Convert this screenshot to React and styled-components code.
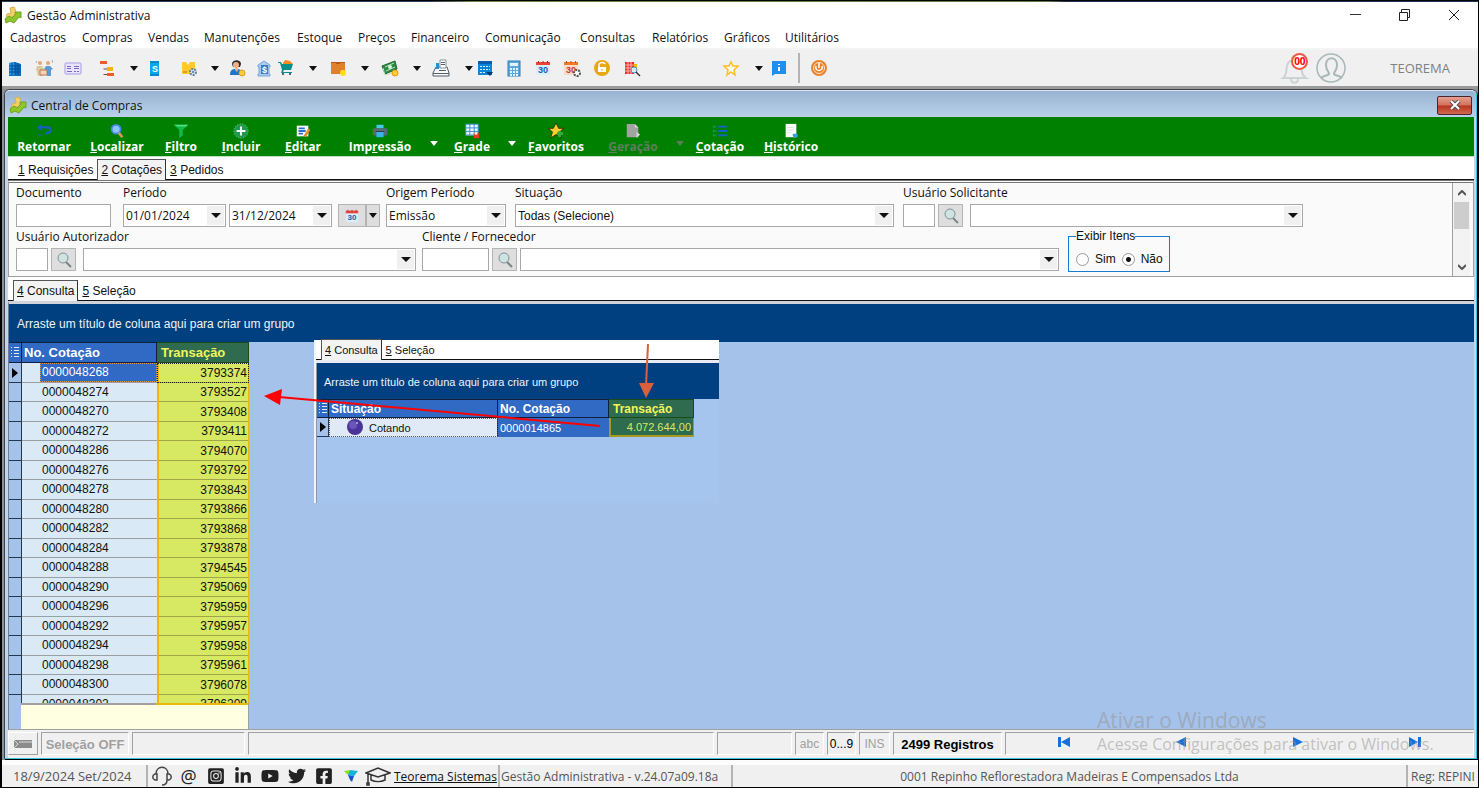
import React from 'react';
import styled, { css, createGlobalStyle } from 'styled-components';
import {
  FaInstagramSquare,
  FaLinkedinIn,
  FaYoutube,
  FaTwitter,
  FaFacebookSquare,
} from 'react-icons/fa';


const uiFont = '"Open Sans", "Noto Sans", sans-serif';
const gridFont = '"Liberation Sans", Arial, sans-serif';
const sunkenBorder = css`
  border: 1px solid;
  border-color: #a0a0a0 #fff #fff #a0a0a0;
`;

const GlobalStyle = createGlobalStyle`
  * {
    box-sizing: border-box;
  }

  body {
    margin: 0;
    background: #000;
    font-family: ${uiFont};
    font-size: 12px;
    color: #111;
  }

  button, input, select {
    font: inherit;
    color: inherit;
    margin: 0;
    padding: 0;
    border-radius: 0;
  }

  button {
    border: 0;
    background: none;
  }
`;

const Desktop = styled.div`
  position: relative;
  display: flex;
  flex-direction: column;
  height: 100vh;
  overflow: hidden;
  border: solid #000;
  border-width: 1px 1px 1px 2px;
  background: #fff;
`;

const Backdrop = styled.div`
  flex: none;
  height: 1px;
  background: linear-gradient(90deg, #24405c 29%, #6b8a4a 32%, #5a7a4a 71%, #1d3458 72%);
`;

const TitleBar = styled.header`
  flex: none;
  display: flex;
  align-items: center;
  height: 26px;
  padding-left: 2px;
  gap: 5px;
`;

const WindowButtons = styled.div`
  display: flex;
  margin-left: auto;
`;

const WindowButton = styled.button`
  display: flex;
  align-items: center;
  justify-content: center;
  width: 49px;
  height: 24px;
`;

const Menu = styled.nav`
  flex: none;
  display: flex;
  height: 20px;
  padding-left: 8px;
`;

const MenuItem = styled.button`
  width: ${props => props.$width}px;
  line-height: 20px;
  text-align: left;
  white-space: nowrap;
`;

const Toolbar = styled.div`
  flex: none;
  display: flex;
  align-items: center;
  height: 38px;
  border-top: 2px solid #f4f4f4;
  background: #f0f0f0;
`;

const ToolButton = styled.button`
  flex: none;
  display: flex;
  align-items: center;
  justify-content: center;
  width: ${props => (props.$small ? 12 : 20)}px;
  height: 24px;
  margin-left: ${props => props.$gap}px;
`;

const ToolSeparator = styled.div`
  width: 2px;
  height: 30px;
  margin-left: 9px;
  background: #b4b4b4;
`;

const Account = styled.div`
  display: flex;
  align-items: center;
  margin-left: auto;
  padding-right: 28px;
  color: #808080;
`;

const AccountName = styled.span`
  margin-left: 44px;
  font-size: 13px;
  line-height: 18px;
`;

const Bell = styled.button`
  position: relative;
  width: 30px;
  height: 34px;
  margin-right: 6px;
`;

const Badge = styled.span`
  position: absolute;
  top: 2px;
  right: 2px;
  width: 17px;
  height: 17px;
  border: 2px solid #f05545;
  border-radius: 50%;
  background: #fff;
  color: #f00;
  font-size: 10px;
  font-weight: bold;
  line-height: 13px;
  text-align: center;
`;

const Workspace = styled.main`
  flex: 1;
  display: flex;
  min-height: 0;
  padding: 3px 1px 1px 2px;
  background: linear-gradient(#9a9a9a 3px, #8a8f98 3px);
`;

const ChildWindow = styled.section`
  flex: 1;
  display: flex;
  flex-direction: column;
  min-width: 0;
  padding: 0 2px 0 3px;
  border: 1px solid #3c3f45;
  border-right-color: #35c3e0;
  border-bottom-color: #35c3e0;
  border-radius: 6px 6px 0 0;
  box-shadow: 1px 1px 0 #000;
  background: #c4d6ea;
`;

const ChildTitle = styled.div`
  flex: none;
  display: flex;
  align-items: center;
  height: 27px;
  gap: 4px;
  margin: 0 -2px 0 -3px;
  padding: 2px 2px 0 4px;
  border-top: 1px solid #dbe6f2;
  border-radius: 5px 5px 0 0;
  background: linear-gradient(#98b3d2, #b9d1ea);
`;

const CloseButton = styled.button`
  display: flex;
  align-items: center;
  justify-content: center;
  width: 35px;
  height: 19px;
  margin: 0 2px 0 auto;
  border: 1px solid #4a2430;
  border-radius: 2px;
  background: linear-gradient(#e3a090, #d3705c 48%, #b8321c 52%, #cf6a50);
`;

const ActionBar = styled.div`
  flex: none;
  display: flex;
  height: 40px;
  border-bottom: 1px solid #bfe0bf;
  background: #008000;
`;

const Action = styled.button`
  display: flex;
  flex-direction: column;
  align-items: center;
  width: ${props => props.$width}px;
  padding-top: 6px;
  color: #fff;
  font-weight: bold;
  line-height: 16px;
  white-space: nowrap;

  svg {
    flex: none;
  }

  &:disabled {
    color: #5f7d5f;
  }
`;

const ActionCaret = styled.button`
  width: ${props => props.$width}px;
  padding-top: 10px;
  color: ${props => (props.disabled ? '#5f7d5f' : '#fff')};
`;

const Tabs = styled.div`
  flex: none;
  display: flex;
  align-items: flex-end;
  height: ${props => props.$height || 23}px;
  padding-left: ${props => props.$indent || 0}px;
  border-bottom: 1px solid #111;
  background: #fff;
  font-family: ${gridFont};
  font-size: 12px;
`;

const Tab = styled.button`
  height: 20px;
  padding: 0 3px;
  border: 1px solid transparent;
  border-bottom: 0;
  line-height: 18px;
  white-space: nowrap;
  ${props => props.$active && css`
    height: 21px;
    margin-bottom: -1px;
    border-color: #555 #333 #333 #555;
    background: #f3f3f3;
  `}
`;

const FilterPanel = styled.form`
  flex: none;
  display: flex;
  height: 97px;
  padding-right: 3px;
  border: solid #a0a0a0;
  border-width: 1px;
  border-top: 3px double #777;
  background: #fafafa;
`;

const FilterFields = styled.div`
  flex: 1;
  min-width: 0;
  overflow: hidden;
`;

const FilterRow = styled.div`
  display: flex;
  height: 44px;
  padding-left: 7px;
`;

const Field = styled.div`
  flex: none;
  margin-left: ${props => props.$gap || 0}px;
`;

const FieldLabel = styled.label`
  display: block;
  height: 21px;
  line-height: 20px;
  white-space: nowrap;
`;

const Controls = styled.div`
  display: flex;
  gap: 3px;
`;

const TextBox = styled.input`
  width: ${props => props.$width}px;
  height: 23px;
  border: 1px solid #a8a8a8;
  background: #fff;
`;

const Combo = styled.div`
  position: relative;
  width: ${props => props.$width}px;
  height: 23px;
  margin-left: ${props => props.$gap || 0}px;
  font-family: ${props => (props.$grid ? gridFont : uiFont)};

  select, input {
    width: 100%;
    height: 100%;
    padding: 0 20px 0 2px;
    border: 1px solid #a8a8a8;
    background: #fff;
    appearance: none;
  }
`;

const ComboArrow = styled.span`
  position: absolute;
  top: 2px;
  right: 2px;
  display: flex;
  align-items: center;
  justify-content: center;
  width: 17px;
  height: 19px;
  background: #f0f0f0;
  pointer-events: none;
`;

const GrayButton = styled.button`
  display: flex;
  align-items: center;
  justify-content: center;
  width: ${props => props.$width}px;
  height: 23px;
  border: 1px solid #b4b4b4;
  background: #dedede;
`;

const SplitButton = styled.div`
  display: flex;
`;

const ShowItems = styled.fieldset`
  width: 102px;
  min-width: 0;
  height: 42px;
  margin: 3px 0 0 9px;
  padding: 9px 0 0 7px;
  border: 1px solid #1a7ad0;
  font-family: ${gridFont};

  legend {
    padding: 0;
    line-height: 13px;
  }

  div {
    display: flex;
    align-items: center;
    gap: 6px;
  }
`;

const Radio = styled.input`
  flex: none;
  appearance: none;
  width: 13px;
  height: 13px;
  border: 1px solid #999;
  border-radius: 50%;
  background: #fff;

  &:checked {
    background: radial-gradient(#111 0 2px, #fff 3px);
  }
`;

const ScrollBar = styled.div`
  display: flex;
  flex-direction: column;
  align-items: center;
  width: 18px;
  border-left: 1px solid #a0a0a0;
  background: #f3f3f3;
`;

const ScrollArrow = styled.button`
  display: flex;
  align-items: center;
  justify-content: center;
  width: 17px;
  height: 19px;
  color: #555;
`;

const ScrollThumb = styled.div`
  width: 15px;
  height: 27px;
  margin-bottom: auto;
  background: #cdcdcd;
`;

const GridArea = styled.div`
  position: relative;
  flex: 1;
  display: flex;
  flex-direction: column;
  min-height: 0;
  border-top: 3px solid #d0d4da;
  border-left: 1px solid #6d7f98;
  border-bottom: 1px solid #a0a0a0;
  background: #a4c2ea;
`;

const GroupBar = styled.div`
  flex: none;
  height: ${props => props.$height}px;
  padding-left: ${props => props.$indent}px;
  background: #004080;
  color: #eef4fb;
  font-family: ${gridFont};
  font-size: ${props => (props.$small ? 11 : 12)}px;
  line-height: ${props => props.$height + 2}px;
  white-space: nowrap;
`;

const RowsViewport = styled.div`
  flex: 1;
  min-height: 0;
  overflow: hidden;
`;

const QuoteTable = styled.table`
  width: ${props => props.$width}px;
  border-collapse: separate;
  border-spacing: 0;
  table-layout: fixed;
  font-family: ${gridFont};
  font-size: ${props => (props.$small ? 11 : 12)}px;

  tbody tr {
    height: ${props => (props.$small ? 19 : 20)}px;
  }

  tbody tr:nth-child(even) {
    height: 19px;
  }
`;

const HeadCell = styled.th`
  width: ${props => props.$width}px;
  height: ${props => (props.$small ? 19 : 21)}px;
  padding: 0 2px;
  border: solid #10203c;
  border-width: 1px 1px 1px 0;
  background: #316ac5;
  color: #fff;
  font-size: ${props => (props.$small ? 12 : 13)}px;
  line-height: 16px;
  text-align: left;
  white-space: nowrap;
  ${props => props.$marked && css`
    padding-left: 4px;
    border-color: #1d4a12;
    background: #2f6b4f;
    color: #f2f55c;
  `}
`;

const MarkerCell = styled.td`
  padding: 0;
  border: solid #26364f;
  border-width: 0 1px 1px 0;
  background: #a4c2ea;
  line-height: 0;
  text-align: center;
`;

const NumberCell = styled.td`
  padding: 0 0 0 18px;
  border-bottom: 1px solid #9a9fa4;
  background: #d9eaf6;
  line-height: 17px;

  span {
    display: block;
    padding-left: 2px;
  }

  ${props => props.$selected && css`
    color: #fff;

    span {
      outline: 1px dotted #d89a4a;
      outline-offset: -1px;
      background: #316ac5;
      line-height: 19px;
    }
  `}
`;

const MarkedCell = styled.td`
  padding: 0 1px 0 0;
  border: solid #eab90c;
  border-width: 0 1px 0 2px;
  background: #d7e862;
  box-shadow: inset 0 -1px 0 #a0a548;
  line-height: 17px;
  text-align: right;
  ${props => props.$selected && css`
    outline: 1px dotted #222;
    outline-offset: -1px;
  `}
`;

const GridFooter = styled.div`
  flex: none;
  width: 240px;
  height: 26px;
  border-right: 1px solid #a0a0a0;
  border-left: 12px solid #a4c2ea;
  background:
    linear-gradient(90deg, #a0a0a0 135px, #eab90c 135px) 0 0 / 100% 2px no-repeat,
    #ffffe1;
`;

const Excerpt = styled.div`
  position: absolute;
  top: 36px;
  left: 305px;
  width: 405px;
  height: 163px;
  padding-left: 1px;
  border-left: 2px solid #f4f4f4;
  background: #a5c5ee;
  box-shadow: inset 1px 0 0 #8c97a8;
`;

const ExcerptTabs = styled(Tabs)`
  margin: 0 0 3px -1px;
  box-shadow: 0 3px 0 #e8ecf2;
  font-size: 11px;
`;

const StatusCell = styled.td`
  padding: 0 0 0 18px;
  border-right: 1px solid #10203c;
  background: #dfeaf6;
  outline: 1px dotted #555;
  outline-offset: -1px;

  div {
    display: flex;
    align-items: center;
    gap: 5px;
  }
`;

const PickedCell = styled.td`
  padding: 0 2px;
  background: ${props => (props.$marked ? '#2f6b4f' : '#316ac5')};
  color: ${props => (props.$marked ? '#d7e862' : '#fff')};
  ${props => props.$marked && css`
    border: solid #a89a20;
    border-width: 0 1px 2px 2px;
    text-align: right;
  `}
`;

const Annotations = styled.svg`
  position: absolute;
  top: 0;
  left: 0;
  pointer-events: none;
`;

const StatusBar = styled.div`
  flex: none;
  display: flex;
  gap: 3px;
  height: 28px;
  padding: 2px 0 3px;
  background: #f0f0f0;
  font-family: ${gridFont};
`;

const StatusButton = styled.button`
  width: 30px;
  border: 1px solid;
  border-color: #fff #a0a0a0 #a0a0a0 #fff;
`;

const StatusPanel = styled.div`
  ${sunkenBorder}
  flex: ${props => (props.$width ? 'none' : '1')};
  width: ${props => props.$width}px;
  min-width: 0;
  color: ${props => (props.$on ? '#000' : '#a0a0a0')};
  font-size: ${props => (props.$bold ? 13 : 12)}px;
  font-weight: ${props => (props.$bold ? 'bold' : 'normal')};
  line-height: 23px;
  text-align: center;
  white-space: nowrap;
`;

const Navigator = styled(StatusPanel)`
  display: flex;
  align-items: center;
  justify-content: space-around;
`;

const AppFooter = styled.footer`
  flex: none;
  display: flex;
  height: 27px;
  border-top: 5px solid #fcfcfc;
  background: #f0f0f0;
  color: #555;
  line-height: 23px;
  white-space: nowrap;
`;

const FooterPanel = styled.div`
  flex: ${props => (props.$width ? 'none' : '1')};
  width: ${props => props.$width}px;
  padding-left: ${props => props.$indent || 0}px;
  border-right: 2px solid ${props => (props.$last ? 'transparent' : '#b4b4b4')};
  overflow: hidden;
  font-size: ${props => (props.$large ? 13 : 12)}px;
  text-align: ${props => (props.$center ? 'center' : 'left')};
`;

const Links = styled.div`
  flex: none;
  display: flex;
  align-items: center;
  width: 352px;
  border-right: 2px solid #b4b4b4;
  color: #222;
`;

const SocialLink = styled.a`
  display: flex;
  align-items: center;
  justify-content: center;
  width: 27px;
  color: inherit;
  font-size: 18px;
  text-decoration: none;
`;

const CompanyLink = styled.a`
  margin-left: 3px;
  color: #111;
`;

const Watermark = styled.div`
  position: absolute;
  right: 56px;
  bottom: 33px;
  width: 325px;
  color: rgba(150, 150, 150, 0.55);
  font-size: 16px;
  line-height: 20px;
  white-space: nowrap;
  pointer-events: none;

  strong {
    display: block;
    font-size: 21px;
    font-weight: normal;
    line-height: 28px;
  }
`;


const icons = {
  building: (
    <>
      <path fill="#0b6fc4" d="M3 4l6-1 6 2v12H3z" />
      <path fill="#2196e8" d="M3 4l6-1v13H3z" />
      <path stroke="#064b8f" d="M3 7h12M3 10h12M3 13h12M6 4v12M9 3v13M12 4v12" fill="none" />
    </>
  ),
  people: (
    <>
      <circle cx="5" cy="4" r="2" fill="#e0a777" />
      <circle cx="13" cy="4" r="2" fill="#e0a777" />
      <path fill="#d8c9a0" d="M2 7h5l2 3-1 7H3L1 10z" />
      <path fill="#5b9bd5" d="M11 7h4l3 3-2 1v6h-4v-5l-3-2z" />
      <path fill="#f4d5bd" stroke="#c1754b" d="M5 11h7v5H5z" />
      <path stroke="#b0aaa0" d="M2 2l-1 2M17 1l1 3" />
    </>
  ),
  card: (
    <>
      <rect x="1" y="4" width="16" height="11" rx="1" fill="#e9e4ff" stroke="#a79be0" />
      <path stroke="#7768c9" d="M3 7.500h4M3 9.500h4M3 12.500h5M10 7.500h5M10 9.500h5M10 12.500h2M13 12.500h2" />
    </>
  ),
  tree: (
    <>
      <path fill="#f05a28" d="M2 2h7v3H2zM9 14h7v3H9z" />
      <path fill="#f5b400" d="M9 8h6v4H9z" />
      <path stroke="#555" fill="none" d="M5.500 15.500H9M5.500 10H9" />
    </>
  ),
  money: (
    <>
      <path fill="#0aa5ea" d="M5 2h9v15H5z" />
      <path fill="#0789cf" d="M5 2h9v2H5zM5 15h9v2H5z" />
      <text x="7" y="13" fontSize="9" fontWeight="bold" fill="#fff" fontFamily="Liberation Sans">S</text>
    </>
  ),
  package: (
    <>
      <path fill="#ffc928" d="M2 3h4l2 3 2-3h5v12H2z" />
      <path stroke="#b5732c" d="M4 12v2M6 12v2" />
      <circle cx="13" cy="13" r="3" fill="#dce7f2" stroke="#6a7f98" strokeWidth="2" strokeDasharray="2 1" />
      <circle cx="13" cy="13" r="1" fill="#4a6b98" />
    </>
  ),
  person: (
    <>
      <path fill="#2b2b33" d="M4 5c0-5 9-5 9 0l-1 3H5z" />
      <circle cx="8" cy="6" r="3" fill="#f3b27a" />
      <path fill="#1a78c8" d="M2 16c0-5 2-6 6-6s6 1 6 6z" />
      <path fill="#f3b27a" d="M7 9h3v2l-1 2-2-2z" />
      <circle cx="14" cy="14" r="3" fill="#ffcd3c" stroke="#e39a12" />
    </>
  ),
  bank: (
    <>
      <path fill="#a9c9f2" stroke="#7aa5dc" d="M3 6l6-4 6 4v2h-1v7h1v2H3v-2h1V8H3z" />
      <rect x="6" y="6" width="7" height="9" fill="#3e79c8" />
      <text x="7" y="14" fontSize="9" fontWeight="bold" fill="#fff" fontFamily="Liberation Sans">$</text>
    </>
  ),
  cart: (
    <>
      <path fill="#f48b20" d="M6 4l2-3 5 1 3 3H6z" />
      <path fill="#08918a" d="M1 3h3l1 2h11l-2 6H7l-1 2h9v1H4l1-3-2-7H1z" />
      <circle cx="6" cy="15" r="1" fill="#163b50" />
      <circle cx="13" cy="15" r="1" fill="#163b50" />
    </>
  ),
  box: (
    <>
      <path fill="#e0802c" d="M2 3h14v12H2z" />
      <path fill="#b9581b" d="M2 3h14v1H2zM7 4h4v1H7z" />
      <circle cx="14" cy="14" r="3" fill="#ffde14" />
    </>
  ),
  cash: (
    <>
      <path fill="#2d8a43" stroke="#176a30" d="M1 7l13-5 2 8-12 5z" />
      <path stroke="#bfe3c2" d="M4 8l9-4M5 12l9-4M2 9l2 7 8-2" fill="none" />
      <circle cx="9" cy="8" r="2" fill="#d9f2d9" />
      <circle cx="14" cy="14" r="3" fill="#ffcd3c" stroke="#e39a12" />
    </>
  ),
  register: (
    <>
      <path fill="#f7f9fb" stroke="#4f5a64" d="M4 8h11l2 6v3H1v-3z" />
      <path fill="#fff" stroke="#8a949c" d="M8 1h6v8H8z" />
      <path fill="#2c8fd1" d="M4 4h3v6H4z" />
      <path stroke="#56616b" d="M9 3.500h4M9 5.500h4M1 14.500h16M7 11.500h7" />
    </>
  ),
  calendarBlue: (
    <>
      <path fill="#0a85d8" d="M2 2h14v14H2z" />
      <path fill="#0a5cae" d="M2 2h14v3H2z" />
      <path stroke="#d8efff" d="M4 7.500h10M4 10.500h10M4 13.500h6" strokeDasharray="2 1" />
      <path fill="#063a6e" d="M10 13h7l-3 4z" />
    </>
  ),
  calculator: (
    <>
      <rect x="3" y="2" width="12" height="15" fill="#5ea9dc" stroke="#2e7db8" />
      <path fill="#e6f4fd" d="M5 4h8v3H5z" />
      <path stroke="#e6f4fd" strokeWidth="2" strokeDasharray="2 1" d="M5 10h8M5 13h8M5 16h8" />
    </>
  ),
  calendar: (
    <>
      <rect x="2" y="3" width="14" height="13" fill="#dceefb" />
      <path fill="#e8443a" d="M2 3h14v3H2z" />
      <path stroke="#a82a24" d="M4.500 2v2M9 2v2M13.500 2v2" />
      <text x="4" y="14" fontSize="9" fontWeight="bold" fill="#1760b0" fontFamily="Liberation Sans">30</text>
    </>
  ),
  calendarGear: (
    <>
      <rect x="1" y="3" width="14" height="13" fill="#f8dcc9" />
      <path fill="#f07a28" d="M1 3h14v3H1z" />
      <path stroke="#b85010" d="M3.500 2v2M8 2v2M12.500 2v2" />
      <text x="3" y="14" fontSize="9" fontWeight="bold" fill="#cc3a2c" fontFamily="Liberation Sans">30</text>
      <circle cx="14" cy="14" r="3" fill="#fff" stroke="#4a5560" strokeWidth="2" strokeDasharray="2 1" />
    </>
  ),
  lock: (
    <>
      <circle cx="9" cy="9" r="8" fill="#e8a816" />
      <path fill="#fff" d="M5 8h8v5H5z" />
      <path fill="none" stroke="#fff" strokeWidth="1.5" d="M6 8V6c0-3 5-3 6-1" />
      <path stroke="#e8a816" d="M9 10v2" />
    </>
  ),
  buildingSearch: (
    <>
      <path fill="#e0352e" d="M2 3h9v12H2z" />
      <path fill="#f5b400" d="M11 5h3v8h-3z" />
      <path stroke="#ffb0aa" d="M2 6h9M2 9h9M2 12h9M5 3v12M8 3v12" />
      <circle cx="11" cy="11" r="3" fill="#d5ebf8" stroke="#4c90c0" />
      <path stroke="#333" strokeWidth="1.5" d="M13 13l4 4" />
    </>
  ),
  starOutline: (
    <path fill="#fffdf2" stroke="#fcbf22" strokeWidth="1.5" d="M9 3l2 4h5l-4 4 1 5-4-3-4 3 1-5-4-4h5z" />
  ),
  info: (
    <>
      <path fill="#1e8fee" d="M2 2h14v13H5l-3 2z" />
      <path stroke="#fff" strokeWidth="2" d="M9 8v4M9 5v1" />
    </>
  ),
  power: (
    <>
      <circle cx="9" cy="9" r="8" fill="#e8832c" />
      <circle cx="9" cy="9" r="5.5" fill="none" stroke="#fbe3cd" strokeWidth="1" />
      <path fill="none" stroke="#fff" strokeWidth="1.5" d="M6 7c-2 6 8 6 6 0M9 4v5" />
    </>
  ),
  back: (
    <>
      <path fill="none" stroke="#145fc4" strokeWidth="2.500" d="M3 5h10c5 0 4 6 0 6h-2" />
      <path fill="#145fc4" d="M1 5l5-4v8z" />
      <path stroke="#145fc4" strokeWidth="2" strokeDasharray="1 1" d="M2 13h11" />
    </>
  ),
  find: (
    <>
      <circle cx="8" cy="7" r="5" fill="#8ac4fa" stroke="#4388e0" strokeWidth="2" />
      <path stroke="#d69a5c" strokeWidth="3" d="M11 11l4 5" />
    </>
  ),
  funnel: (
    <>
      <path fill="#12b84a" d="M1 2h16l-6 6v6l-4 3V8z" />
      <path fill="#4ee07c" d="M1 2h16l-2 2H5z" />
    </>
  ),
  add: (
    <>
      <circle cx="9" cy="9" r="8" fill="#1f9a4e" />
      <circle cx="9" cy="9" r="8" fill="none" stroke="#9bd9b0" strokeDasharray="1 2" />
      <path stroke="#fff" strokeWidth="2" d="M9 4v10M4 9h10" />
    </>
  ),
  edit: (
    <>
      <path fill="#fff" d="M2 3h13v12H2z" />
      <path stroke="#2c6fc8" strokeWidth="2" d="M4 6h7M4 9h8M4 12h5" />
      <path stroke="#f08a24" strokeWidth="3" d="M16 7l-5 8" />
    </>
  ),
  printer: (
    <>
      <path fill="#45c8ee" d="M5 2h8v4H5z" />
      <path fill="#596a78" d="M1 6h16v8H1z" />
      <path fill="#35b5e5" d="M5 10h8v6H5z" />
      <path fill="#2b3a48" d="M4 9h10v1H4z" />
    </>
  ),
  table: (
    <>
      <path fill="#eaf6ff" d="M2 1h14v13H2z" />
      <path stroke="#2a86d8" fill="none" d="M2 1.500h14v12H2zM2 5.500h14M2 9.500h14M6.500 1v13M11.500 1v13" />
      <path fill="#e63b24" d="M11 11h6v6h-6z" />
      <path fill="#fff" d="M12 11h3v2h-3z" />
    </>
  ),
  favorite: (
    <>
      <path fill="#ffce2e" stroke="#3a2a00" d="M9 0l3 6h6l-5 4 2 7-6-4-6 4 2-7-5-4h6z" />
      <path stroke="#2fae3e" strokeWidth="3" d="M13 9v7M10 12h7" />
    </>
  ),
  sheetGray: (
    <>
      <path fill="#a3a3a3" d="M2 1h9l4 4v11H2z" />
      <path fill="#d8d8d8" d="M11 1l4 4h-4zM13 10l4 3-4 4z" />
    </>
  ),
  list: (
    <>
      <path stroke="#1a5fd0" strokeWidth="2" d="M7 4h10M7 9h10M7 14h10" />
      <path stroke="#12a070" strokeWidth="2" strokeDasharray="2 1" d="M1 4h4M1 9h4M1 14h4" />
    </>
  ),
  sheet: (
    <>
      <path fill="#fff" d="M3 1h12v15H3z" />
      <path stroke="#d3dbe2" d="M5 5h7M5 8h7M5 11h4" />
      <path fill="#3f9be0" d="M11 12h5l1 3-3 2-3-2z" />
    </>
  ),
  logo: (
    <>
      <path fill="#f4cf65" stroke="#d9b14a" d="M6 2l4-1 2 4-2 3 2 3H2l1-3 4-1z" />
      <path fill="#8fc62a" stroke="#6fa524" d="M1 13l4-3 3 2 4-4-1-2h6v6l-2-1-5 6-4-2-4 2z" />
    </>
  ),
  magnifier: (
    <>
      <circle cx="8" cy="7" r="5" fill="#cfe3e3" stroke="#7f9294" />
      <path stroke="#7b8587" strokeWidth="2" d="M11 11l5 5" />
    </>
  ),
};

function Icon({ name, size = 18 }) {
  return (
    <svg width={size} height={size} viewBox="0 0 18 18" aria-hidden="true">{icons[name]}</svg>
  );
}

function Caret({ width = 8 }) {
  return (
    <svg width={width} height={5} viewBox="0 0 10 5" preserveAspectRatio="none" aria-hidden="true">
      <path fill="currentColor" d="M0 0h10L5 5z" />
    </svg>
  );
}

function Hot({ text, at = 0 }) {
  return (
    <span>{text.slice(0, at)}<u>{text[at]}</u>{text.slice(at + 1)}</span>
  );
}

const menuItems = [
  ['Cadastros', 72], ['Compras', 66], ['Vendas', 56], ['Manutenções', 93],
  ['Estoque', 61], ['Preços', 53], ['Financeiro', 74], ['Comunicação', 95],
  ['Consultas', 72], ['Relatórios', 72], ['Gráficos', 61], ['Utilitários', 60],
];

const tools = [
  ['building', 3], ['people', 9], ['card', 9], ['tree', 14], ['caret', 11],
  ['money', 4], ['package', 15], ['caret', 10], ['person', 6], ['bank', 7],
  ['cart', 2], ['caret', 11], ['box', 9], ['caret', 11], ['cash', 9],
  ['caret', 11], ['register', 8], ['caret', 12], ['calendarBlue', 0],
  ['calculator', 9], ['calendar', 9], ['calendarGear', 9], ['lock', 10],
  ['buildingSearch', 10], ['starOutline', 79], ['caret', 12], ['info', 4],
];

const actions = [
  { text: 'Retornar', icon: 'back', width: 72, at: -1 },
  { text: 'Localizar', icon: 'find', width: 74 },
  { text: 'Filtro', icon: 'funnel', width: 54 },
  { text: 'Incluir', icon: 'add', width: 66 },
  { text: 'Editar', icon: 'edit', width: 58 },
  { text: 'Impressão', icon: 'printer', width: 96, at: 3, caret: 12 },
  { text: 'Grade', icon: 'table', width: 64, caret: 16 },
  { text: 'Favoritos', icon: 'favorite', width: 72 },
  { text: 'Geração', icon: 'sheetGray', width: 82, caret: 12, disabled: true },
  { text: 'Cotação', icon: 'list', width: 68 },
  { text: 'Histórico', icon: 'sheet', width: 74 },
];

const quotes = [
  ['0000048268', '3793374'],
  ['0000048274', '3793527'],
  ['0000048270', '3793408'],
  ['0000048272', '3793411'],
  ['0000048286', '3794070'],
  ['0000048276', '3793792'],
  ['0000048278', '3793843'],
  ['0000048280', '3793866'],
  ['0000048282', '3793868'],
  ['0000048284', '3793878'],
  ['0000048288', '3794545'],
  ['0000048290', '3795069'],
  ['0000048296', '3795959'],
  ['0000048292', '3795957'],
  ['0000048294', '3795958'],
  ['0000048298', '3795961'],
  ['0000048300', '3796078'],
  ['0000048302', '3796209'],
];

function ComboBox({ label, id, value, width, gap, grid }) {
  return (
    <Combo $width={width} $gap={gap} $grid={grid}>
      <select id={id} aria-label={label}>
        <option>{value}</option>
      </select>
      <ComboArrow><Caret width={10} /></ComboArrow>
    </Combo>
  );
}

function DateBox({ label, id, value }) {
  return (
    <Combo $width={103}>
      <input id={id} aria-label={label} defaultValue={value} />
      <ComboArrow><Caret width={10} /></ComboArrow>
    </Combo>
  );
}

function LookupField({ label, id, gap, codeWidth, width, comboGap }) {
  return (
    <Field $gap={gap}>
      <FieldLabel htmlFor={id}>{label}</FieldLabel>
      <Controls>
        <TextBox id={id} $width={codeWidth} />
        <GrayButton type="button" $width={25} aria-label={`Localizar ${label}`}>
          <Icon name="magnifier" />
        </GrayButton>
        <ComboBox label={label} width={width} gap={comboGap} />
      </Controls>
    </Field>
  );
}

function MainToolbar() {
  return (
    <Toolbar>
      {tools.map(([name, gap], i) => (
        <ToolButton key={i} $gap={gap} $small={name === 'caret'} aria-label={name}>
          {name === 'caret' ? <Caret /> : <Icon name={name} />}
        </ToolButton>
      ))}
      <ToolSeparator />
      <ToolButton $gap={9} aria-label="Sair"><Icon name="power" /></ToolButton>
      <Account>
        <Bell aria-label="Avisos">
          <svg width="30" height="34" viewBox="0 0 30 34" fill="none" stroke="#cdd2d4" strokeWidth="2">
            <path d="M3 27c4-3 3-7 4-12 1-4 3-6 7-6s6 2 7 6c1 5 0 9 5 12zM11 28c0 5 7 5 7 0M12 8c0-4 4-4 4 0" />
          </svg>
          <Badge>00</Badge>
        </Bell>
        <svg width="30" height="30" viewBox="0 0 30 30" fill="none" stroke="#a9b7b9" strokeWidth="1.500">
          <circle cx="15" cy="15" r="14" />
          <path d="M5 25c3-3 7-2 8-4 0-3-3-3-3-9 0-9 11-9 11 0 0 6-3 6-3 9 1 2 5 1 8 4" strokeWidth="2" />
        </svg>
        <AccountName>TEOREMA</AccountName>
      </Account>
    </Toolbar>
  );
}

function Actions() {
  return (
    <ActionBar>
      {actions.map(action => (
        <React.Fragment key={action.text}>
          <Action $width={action.width} disabled={action.disabled}>
            <Icon name={action.icon} size={16} />
            {action.at === -1 ? action.text : <Hot text={action.text} at={action.at} />}
          </Action>
          {action.caret && (
            <ActionCaret $width={action.caret} disabled={action.disabled} aria-label={`Opções de ${action.text}`}>
              <Caret />
            </ActionCaret>
          )}
        </React.Fragment>
      ))}
    </ActionBar>
  );
}

function Filters() {
  return (
    <FilterPanel>
      <FilterFields>
        <FilterRow>
          <Field>
            <FieldLabel htmlFor="documento">Documento</FieldLabel>
            <TextBox id="documento" $width={95} />
          </Field>
          <Field $gap={12}>
            <FieldLabel htmlFor="periodo">Período</FieldLabel>
            <Controls>
              <DateBox id="periodo" value="01/01/2024" />
              <DateBox label="Período final" value="31/12/2024" />
            </Controls>
          </Field>
          <Field $gap={6}>
            <FieldLabel as="span" />
            <SplitButton>
              <GrayButton type="button" $width={28} aria-label="Calendário"><Icon name="calendar" size={16} /></GrayButton>
              <GrayButton type="button" $width={14} aria-label="Opções do calendário"><Caret /></GrayButton>
            </SplitButton>
          </Field>
          <Field $gap={6}>
            <FieldLabel htmlFor="origem">Origem Período</FieldLabel>
            <ComboBox id="origem" value="Emissão" width={120} />
          </Field>
          <Field $gap={9}>
            <FieldLabel htmlFor="situacao">Situação</FieldLabel>
            <ComboBox id="situacao" value="Todas (Selecione)" width={379} grid />
          </Field>
          <LookupField id="solicitante" label="Usuário Solicitante" gap={9} codeWidth={32} width={333} comboGap={4} />
        </FilterRow>
        <FilterRow>
          <LookupField id="autorizador" label="Usuário Autorizador" codeWidth={32} width={333} comboGap={4} />
          <LookupField id="cliente" label="Cliente / Fornecedor" gap={6} codeWidth={67} width={539} />
          <ShowItems>
            <legend>Exibir Itens</legend>
            <div>
              <Radio type="radio" name="itens" id="sim" />
              <label htmlFor="sim">Sim</label>
              <Radio type="radio" name="itens" id="nao" defaultChecked />
              <label htmlFor="nao">Não</label>
            </div>
          </ShowItems>
        </FilterRow>
      </FilterFields>
      <ScrollBar>
        <ScrollArrow type="button" aria-label="Rolar para cima">
          <svg width="8" height="6"><path d="M0 5l4-4 4 4" fill="none" stroke="currentColor" strokeWidth="2" /></svg>
        </ScrollArrow>
        <ScrollThumb />
        <ScrollArrow type="button" aria-label="Rolar para baixo">
          <svg width="8" height="6"><path d="M0 1l4 4 4-4" fill="none" stroke="currentColor" strokeWidth="2" /></svg>
        </ScrollArrow>
      </ScrollBar>
    </FilterPanel>
  );
}

function MenuMark() {
  return (
    <svg width="8" height="10" viewBox="0 0 8 10" aria-hidden="true">
      <path stroke="#dfe9f8" d="M0 .5h1M3 .5h5M0 3.500h1M3 3.500h5M0 6.500h1M3 6.500h5M0 9.500h1M3 9.500h5" />
    </svg>
  );
}

function RowPointer() {
  return (
    <svg width="6" height="10" aria-hidden="true"><path d="M0 0l6 5-6 5z" /></svg>
  );
}

function Quotes() {
  return (
    <RowsViewport>
      <QuoteTable $width={240}>
        <thead>
          <tr>
            <HeadCell $width={13}><MenuMark /></HeadCell>
            <HeadCell $width={135}>No. Cotação</HeadCell>
            <HeadCell $width={92} $marked>Transação</HeadCell>
          </tr>
        </thead>
        <tbody>
          {quotes.map(([number, transaction], i) => (
            <tr key={number}>
              <MarkerCell>{i === 0 && <RowPointer />}</MarkerCell>
              <NumberCell $selected={i === 0}><span>{number}</span></NumberCell>
              <MarkedCell $selected={i === 0}>{transaction}</MarkedCell>
            </tr>
          ))}
        </tbody>
      </QuoteTable>
    </RowsViewport>
  );
}

function QuoteExcerpt() {
  return (
    <Excerpt>
      <ExcerptTabs $height={20} $indent={5}>
        <Tab $active><Hot text="4 Consulta" /></Tab>
        <Tab><Hot text="5 Seleção" /></Tab>
      </ExcerptTabs>
      <GroupBar $height={36} $indent={7} $small>Arraste um título de coluna aqui para criar um grupo</GroupBar>
      <QuoteTable $width={377} $small>
        <thead>
          <tr>
            <HeadCell $small $width={12}><MenuMark /></HeadCell>
            <HeadCell $small $width={169}>Situação</HeadCell>
            <HeadCell $small $width={111}>No. Cotação</HeadCell>
            <HeadCell $small $width={85} $marked>Transação</HeadCell>
          </tr>
        </thead>
        <tbody>
          <tr>
            <MarkerCell><RowPointer /></MarkerCell>
            <StatusCell>
              <div>
                <svg width="17" height="17" aria-hidden="true">
                  <circle cx="8" cy="8" r="8" fill="#4a3596" />
                  <circle cx="6" cy="6" r="4" fill="#6a56b8" />
                  <circle cx="10" cy="4" r="1" fill="#b8b0e8" />
                </svg>
                Cotando
              </div>
            </StatusCell>
            <PickedCell>0000014865</PickedCell>
            <PickedCell $marked>4.072.644,00</PickedCell>
          </tr>
        </tbody>
      </QuoteTable>
    </Excerpt>
  );
}

function NavButton({ d }) {
  return (
    <button aria-label="Navegar">
      <svg width="13" height="10" viewBox="0 0 13 10"><path d={d} fill="#1471dc" /></svg>
    </button>
  );
}

export default function App() {
  return (
    <Desktop>
      <GlobalStyle />
      <Backdrop />
      <TitleBar>
        <Icon name="logo" />
        Gestão Administrativa
        <WindowButtons>
          <WindowButton aria-label="Minimizar">
            <svg width="12" height="12"><path d="M0 5.500h11" stroke="#333" /></svg>
          </WindowButton>
          <WindowButton aria-label="Restaurar">
            <svg width="12" height="12" fill="none" stroke="#222"><path d="M.5 3.500h8v8h-8zM2.500 3.500v-3h8v8h-2" /></svg>
          </WindowButton>
          <WindowButton aria-label="Fechar">
            <svg width="12" height="12"><path d="M1 1l10 10M11 1L1 11" stroke="#222" /></svg>
          </WindowButton>
        </WindowButtons>
      </TitleBar>
      <Menu>
        {menuItems.map(([text, width]) => <MenuItem key={text} $width={width}>{text}</MenuItem>)}
      </Menu>
      <MainToolbar />

      <Workspace>
        <ChildWindow>
          <ChildTitle>
            <Icon name="logo" />
            Central de Compras
            <CloseButton aria-label="Fechar janela">
              <svg width="12" height="10">
                <path d="M2 1l8 8M10 1L2 9" stroke="#5c4a50" strokeWidth="4" />
                <path d="M2 1l8 8M10 1L2 9" stroke="#fff" strokeWidth="2" />
              </svg>
            </CloseButton>
          </ChildTitle>
          <Actions />
          <Tabs $indent={6}>
            <Tab><Hot text="1 Requisições" /></Tab>
            <Tab $active><Hot text="2 Cotações" /></Tab>
            <Tab><Hot text="3 Pedidos" /></Tab>
          </Tabs>
          <Filters />
          <Tabs $indent={5} $height={24}>
            <Tab $active><Hot text="4 Consulta" /></Tab>
            <Tab><Hot text="5 Seleção" /></Tab>
          </Tabs>
          <GridArea>
            <GroupBar $height={38} $indent={8}>Arraste um título de coluna aqui para criar um grupo</GroupBar>
            <Quotes />
            <GridFooter />
            <QuoteExcerpt />
            <Annotations width="720" height="210">
              <path d="M591 122L270 93" stroke="#f00" strokeWidth="2" />
              <path d="M255 92l18-7-2 16z" fill="#f00" />
              <path d="M639 40l-2 42" stroke="#d9603b" strokeWidth="2" />
              <path d="M637 94l-7-15h15z" fill="#d9603b" />
            </Annotations>
          </GridArea>
          <StatusBar>
            <StatusButton aria-label="Seleção">
              <svg width="18" height="8"><path d="M0 0h18v8H0z" fill="#8c8c8c" /><path d="M0 0l4 4-4 4M5 2h13" stroke="#ddd" fill="none" /></svg>
            </StatusButton>
            <StatusPanel $width={88} $bold>Seleção OFF</StatusPanel>
            <StatusPanel $width={113} />
            <StatusPanel $width={466} />
            <StatusPanel $width={75} />
            <StatusPanel $width={29}>abc</StatusPanel>
            <StatusPanel $width={29} $on>0...9</StatusPanel>
            <StatusPanel $width={31}>INS</StatusPanel>
            <StatusPanel $width={109} $bold $on>2499 Registros</StatusPanel>
            <Navigator>
              <NavButton d="M0 0h3v10H0zM12 0v10L3 5z" />
              <NavButton d="M11 0v10L1 5z" />
              <NavButton d="M2 0v10l10-5z" />
              <NavButton d="M1 0v10l9-5zM10 0h3v10h-3z" />
            </Navigator>
          </StatusBar>
        </ChildWindow>
      </Workspace>

      <AppFooter>
        <FooterPanel $width={146} $indent={11} $large>18/9/2024 Set/2024</FooterPanel>
        <Links>
          <SocialLink href="#suporte" aria-label="Suporte">
            <svg width="20" height="20" fill="none" stroke="#444" strokeWidth="1.500">
              <path d="M4 8c0-9 12-9 12 0M3 8h2v6H3c-3-1-3-5 0-6zM17 8h-2v6h2c3-1 3-5 0-6zM15 14c0 4-2 5-5 5" />
            </svg>
          </SocialLink>
          <SocialLink href="#email">@</SocialLink>
          <SocialLink href="#instagram" aria-label="Instagram"><FaInstagramSquare /></SocialLink>
          <SocialLink href="#linkedin" aria-label="LinkedIn"><FaLinkedinIn /></SocialLink>
          <SocialLink href="#youtube" aria-label="YouTube"><FaYoutube /></SocialLink>
          <SocialLink href="#twitter" aria-label="Twitter"><FaTwitter /></SocialLink>
          <SocialLink href="#facebook" aria-label="Facebook"><FaFacebookSquare /></SocialLink>
          <SocialLink href="#teorema" aria-label="Teorema">
            <svg width="16" height="14">
              <path fill="#8edb1c" d="M1 2l7-1-3 5z" />
              <path fill="#12b5d8" d="M7 1l8 1-4 5-6-1z" />
              <path fill="#1457c8" d="M5 6l6 1-2 6-2-2z" />
            </svg>
          </SocialLink>
          <SocialLink href="#cursos" aria-label="Cursos">
            <svg width="26" height="20" fill="none" stroke="#333" strokeWidth="1.500">
              <path d="M1 7l12-5 12 5-12 4zM6 9v5c4 2 10 2 14 0V9M3 8v9M2 17h2v2H2z" />
            </svg>
          </SocialLink>
          <CompanyLink href="#teorema">Teorema Sistemas</CompanyLink>
        </Links>
        <FooterPanel $width={233} $indent={1}>Gestão Administrativa - v.24.07a09.18a</FooterPanel>
        <FooterPanel $center>0001 Repinho Reflorestadora Madeiras E Compensados Ltda</FooterPanel>
        <FooterPanel $width={70} $indent={3} $last>Reg: REPINI</FooterPanel>
      </AppFooter>

      <Watermark>
        <strong>Ativar o Windows</strong>
        Acesse Configurações para ativar o Windows.
      </Watermark>
    </Desktop>
  );
}
